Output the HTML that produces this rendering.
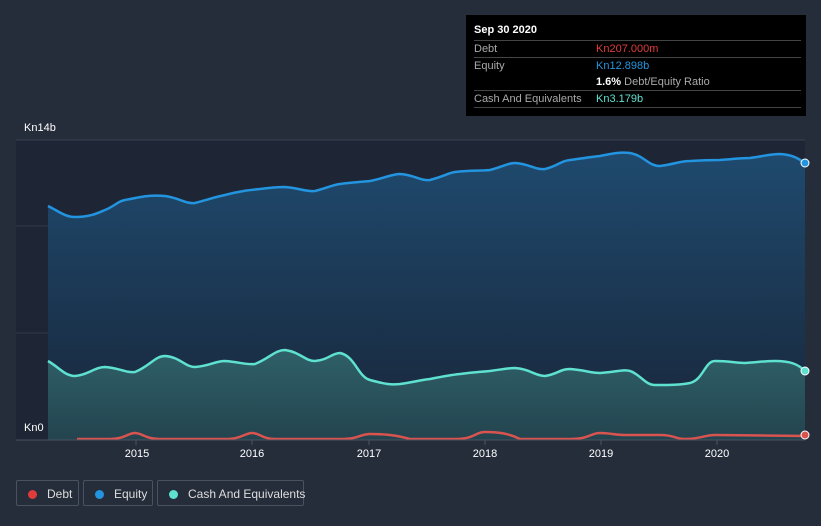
<!DOCTYPE html><html><head><style>
body{margin:0;width:821px;height:526px;background:#262d3a;font-family:"Liberation Sans",sans-serif;overflow:hidden;position:relative}
.t{position:absolute;color:#fff;font-size:11px}
.tip{position:absolute;left:466px;top:15px;width:340px;height:101px;background:#000;font-size:11px}
.row{position:absolute;left:8px;width:327px;border-top:1px solid #444;height:16px}
.lg{position:absolute;top:480px;height:26px;border:1px solid #4a5160;border-radius:2px;color:#ddd;font-size:12px;line-height:26px;box-sizing:border-box;white-space:nowrap}
.lg i{display:inline-block;width:9px;height:9px;border-radius:50%;margin:0 10px 0 11px;vertical-align:-1px}
</style></head><body>
<svg width="821" height="526" style="position:absolute;left:0;top:0">
<defs><linearGradient id="g" x1="0" y1="0" x2="0" y2="1"><stop offset="0" stop-color="#1f4a6e"/><stop offset="1" stop-color="#182538"/></linearGradient>
<linearGradient id="c" x1="0" y1="0" x2="0" y2="1"><stop offset="0" stop-color="#2f6068"/><stop offset="1" stop-color="#23444f"/></linearGradient></defs>
<rect x="16" y="140" width="789" height="300" fill="#1e2534"/>
<line x1="16" y1="140" x2="805" y2="140" stroke="#3a4150"/>
<line x1="16" y1="226" x2="805" y2="226" stroke="#333a48"/>
<line x1="16" y1="333" x2="805" y2="333" stroke="#333a48"/>
<path fill="url(#g)" stroke="none" d="M48,206 C60,212 65,217 75,217 C90,217 98,213 105,210 C115,206 118,201 125,200 C145,196 150,195 165,196 C180,198 185,204 195,203 C210,199 215,197 225,195 C240,191 250,190 260,189 C275,187 280,187 285,187 C300,188 305,192 315,191 C330,187 332,185 340,184 C355,182 362,182 370,181 C385,178 392,174 400,174 C415,175 420,181 430,180 C445,176 448,173 455,172 C470,170 480,171 490,170 C505,166 508,163 515,163 C530,164 535,170 545,169 C558,166 560,161 570,160 C585,158 590,157 600,156 C615,153 620,152 630,153 C645,156 648,166 660,166 C675,164 680,161 690,161 C705,160 710,160 720,160 C735,159 740,158 750,158 C765,156 770,154 780,154 C795,155 800,160 805,163 L805,440 L48,440Z"/>
<path fill="url(#c)" d="M48,361 C60,368 65,376 75,376 C88,375 95,367 105,367 C120,368 125,373 135,372 C150,366 155,356 165,356 C180,357 185,367 195,367 C210,366 215,361 225,361 C240,362 245,365 255,364 C270,358 275,350 285,350 C300,352 305,361 315,361 C328,360 332,353 340,353 C355,356 358,377 370,380 C385,384 390,385 400,384 C415,382 420,380 430,379 C445,376 450,375 460,374 C475,372 480,372 490,371 C505,369 508,368 515,368 C530,369 535,376 545,376 C558,374 560,369 570,369 C585,370 590,373 600,373 C615,372 625,369 630,371 C640,374 645,385 655,385 C670,385 680,385 690,383 C703,380 705,361 715,361 C730,361 735,363 745,363 C760,362 765,361 775,361 C790,361 798,364 805,371 L805,440 L48,440Z"/>
<path fill="none" stroke="#2394df" stroke-width="2.5" d="M48,206 C60,212 65,217 75,217 C90,217 98,213 105,210 C115,206 118,201 125,200 C145,196 150,195 165,196 C180,198 185,204 195,203 C210,199 215,197 225,195 C240,191 250,190 260,189 C275,187 280,187 285,187 C300,188 305,192 315,191 C330,187 332,185 340,184 C355,182 362,182 370,181 C385,178 392,174 400,174 C415,175 420,181 430,180 C445,176 448,173 455,172 C470,170 480,171 490,170 C505,166 508,163 515,163 C530,164 535,170 545,169 C558,166 560,161 570,160 C585,158 590,157 600,156 C615,153 620,152 630,153 C645,156 648,166 660,166 C675,164 680,161 690,161 C705,160 710,160 720,160 C735,159 740,158 750,158 C765,156 770,154 780,154 C795,155 800,160 805,163"/>
<path fill="none" stroke="#5ee1cf" stroke-width="2.5" d="M48,361 C60,368 65,376 75,376 C88,375 95,367 105,367 C120,368 125,373 135,372 C150,366 155,356 165,356 C180,357 185,367 195,367 C210,366 215,361 225,361 C240,362 245,365 255,364 C270,358 275,350 285,350 C300,352 305,361 315,361 C328,360 332,353 340,353 C355,356 358,377 370,380 C385,384 390,385 400,384 C415,382 420,380 430,379 C445,376 450,375 460,374 C475,372 480,372 490,371 C505,369 508,368 515,368 C530,369 535,376 545,376 C558,374 560,369 570,369 C585,370 590,373 600,373 C615,372 625,369 630,371 C640,374 645,385 655,385 C670,385 680,385 690,383 C703,380 705,361 715,361 C730,361 735,363 745,363 C760,362 765,361 775,361 C790,361 798,364 805,371"/>
<path fill="none" stroke="#d9534f" stroke-width="2.5" d="M77,439 L110,439 C125,439 128,433 135,433 C142,433 145,439 160,439 L225,439 C242,439 245,433 252,433 C260,433 262,439 275,439 L340,439 C360,439 360,434 370,434 C385,434 395,435 410,439 L455,439 C475,439 475,432 485,432 C500,432 510,434 520,439 L570,439 C590,439 590,433 600,433 C610,433 615,435 625,435 L660,435 C675,435 675,439 685,439 C700,439 705,435 715,435 L805,436"/>
<line x1="16" y1="440" x2="805" y2="440" stroke="#4a5160"/>
<g stroke="#4a5160"><line x1="136" y1="440" x2="136" y2="445"/><line x1="252" y1="440" x2="252" y2="445"/><line x1="369" y1="440" x2="369" y2="445"/><line x1="485" y1="440" x2="485" y2="445"/><line x1="601" y1="440" x2="601" y2="445"/><line x1="717" y1="440" x2="717" y2="445"/></g>
<circle cx="805" cy="163" r="4" fill="#2394df" stroke="#fff" stroke-width="1"/>
<circle cx="805" cy="371" r="4" fill="#5ee1cf" stroke="#fff" stroke-width="1"/>
<circle cx="805" cy="435" r="4" fill="#d9534f" stroke="#fff" stroke-width="1"/>
<g fill="#fff" font-size="11" text-anchor="middle" font-family="Liberation Sans"><text x="137" y="457">2015</text><text x="252" y="457">2016</text><text x="369" y="457">2017</text><text x="485" y="457">2018</text><text x="601" y="457">2019</text><text x="717" y="457">2020</text></g>
</svg>
<div class="t" style="left:24px;top:122px">Kn14b</div>
<div class="t" style="left:24px;top:422px">Kn0</div>
<div class="tip">
<div style="position:absolute;left:8px;top:9px;color:#fff;font-weight:bold">Sep 30 2020</div>
<div class="row" style="top:25px"><span style="position:absolute;left:0;top:2px;color:#aaa">Debt</span><span style="position:absolute;left:122px;top:2px;color:#e03c3c">Kn207.000m</span></div>
<div class="row" style="top:42px"><span style="position:absolute;left:0;top:2px;color:#aaa">Equity</span><span style="position:absolute;left:122px;top:2px;color:#2394df">Kn12.898b</span><span style="position:absolute;left:122px;top:18px;color:#aaa"><b style="color:#fff">1.6%</b> Debt/Equity Ratio</span></div>
<div class="row" style="top:75px"><span style="position:absolute;left:0;top:2px;color:#aaa">Cash And Equivalents</span><span style="position:absolute;left:122px;top:2px;color:#5ee1cf">Kn3.179b</span></div>
<div class="row" style="top:92px"></div>
</div>
<div class="lg" style="left:16px;width:63px"><i style="background:#e03c3c"></i>Debt</div>
<div class="lg" style="left:83px;width:70px"><i style="background:#2394df"></i>Equity</div>
<div class="lg" style="left:157px;width:147px"><i style="background:#5ee1cf"></i>Cash And Equivalents</div>
</body></html>
